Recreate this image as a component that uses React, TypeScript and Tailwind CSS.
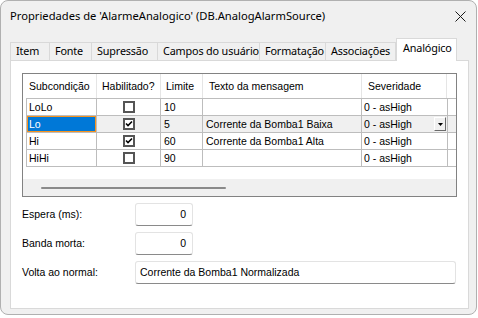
import React from "react";

const Check = ({ checked }: { checked: boolean }) => (
  <div className="w-[12px] h-[12px] border-2 border-[#555555] bg-white flex items-center justify-center">
    {checked && (
      <svg width="8" height="8" viewBox="0 0 8 8">
        <path d="M1 3.5 L3 5.5 L7 1.5" stroke="#000" strokeWidth="1.6" fill="none" />
      </svg>
    )}
  </div>
);

const rows = [
  { sub: "LoLo", hab: false, lim: "10", txt: "", sev: "0 - asHigh", sel: false },
  { sub: "Lo", hab: true, lim: "5", txt: "Corrente da Bomba1 Baixa", sev: "0 - asHigh", sel: true },
  { sub: "Hi", hab: true, lim: "60", txt: "Corrente da Bomba1 Alta", sev: "0 - asHigh", sel: false },
  { sub: "HiHi", hab: false, lim: "90", txt: "", sev: "0 - asHigh", sel: false },
];

const tabs = [
  { t: "Item", w: "w-[40px]" },
  { t: "Fonte", w: "w-[42px]" },
  { t: "Supressão", w: "w-[66px]" },
  { t: "Campos do usuário", w: "w-[102px]" },
  { t: "Formatação", w: "w-[66px]" },
  { t: "Associações", w: "w-[70px]" },
];

const tah = { fontFamily: '"Liberation Sans", Arial, sans-serif' };

export default function App() {
  return (
    <div
      className="w-[478px] h-[318px] bg-white text-black"
      style={{ fontFamily: '"Noto Sans", "Open Sans", sans-serif' }}
    >
      <div className="w-[477px] h-[315px] rounded-[8px] border border-[#b0b0b0] bg-[#f0f0f0] flex flex-col overflow-hidden">
        {/* Title bar */}
        <div className="h-[30px] flex items-center justify-between pl-[9px] pr-[9px]">
          <span className="text-[11.2px] leading-none">Propriedades de 'AlarmeAnalogico' (DB.AnalogAlarmSource)</span>
          <svg width="11" height="11" viewBox="0 0 11 11" className="mr-[1px]">
            <path d="M0.5 0.5 L10.5 10.5 M10.5 0.5 L0.5 10.5" stroke="#1a1a1a" strokeWidth="1" />
          </svg>
        </div>
        {/* Tabs */}
        <div className="h-[29px] pt-[6px] pl-[9px] flex items-end relative z-10">
          {tabs.map((t, i) => (
            <div
              key={t.t}
              className={`${t.w} h-[18px] border-t border-r border-[#d9d9d9] ${i === 0 ? "border-l" : ""} bg-[#f0f0f0] text-[10.8px] tracking-[-0.15px] leading-none pl-[5px] flex items-center whitespace-nowrap overflow-hidden`}
            >
              {t.t}
            </div>
          ))}
          <div className="w-[61px] h-[23px] -mb-[1px] border-t border-r border-l border-[#d9d9d9] bg-white text-[10.8px] tracking-[-0.15px] leading-none pl-[6px] pb-[4px] flex items-center whitespace-nowrap">
            Analógico
          </div>
        </div>
        {/* Panel */}
        <div className="ml-[9px] w-[459px] h-[249px] border border-[#d9d9d9] bg-white pl-[11px] pt-[12px]">
          {/* Grid */}
          <div style={tah} className="w-[435px] h-[124px] border border-[#828282] flex flex-col text-[10.5px] leading-none">
            <div className="h-[24px] flex shrink-0">
              <div className="w-[74px] h-full border-r border-[#e5e5e5] pl-[6px] flex items-center">Subcondição</div>
              <div className="w-[64px] h-full border-r border-[#e5e5e5] pl-[5px] flex items-center">Habilitado?</div>
              <div className="w-[42px] h-full border-r border-[#e5e5e5] pl-[5px] flex items-center">Limite</div>
              <div className="w-[159px] h-full border-r border-[#e5e5e5] pl-[6px] flex items-center">Texto da mensagem</div>
              <div className="w-[85px] h-full border-r border-[#e5e5e5] pl-[6px] flex items-center">Severidade</div>
              <div className="flex-1" />
            </div>
            <div className="ml-[3px] border-t border-[#bdbdbd] flex flex-col">
              {rows.map((r) => (
                <div key={r.sub} className={`h-[17px] flex border-b border-[#bdbdbd] ${r.sel ? "bg-[#f0f0f0]" : "bg-white"}`}>
                  <div className={`w-[71px] h-full border-l border-r border-[#bdbdbd] flex items-center`}>
                    {r.sel ? (
                      <div className="w-full h-full bg-[#0078d7] border border-[#f7931e] text-white pl-[1px] flex items-center">{r.sub}</div>
                    ) : (
                      <span className="pl-[2px]">{r.sub}</span>
                    )}
                  </div>
                  <div className="w-[64px] h-full border-r border-[#bdbdbd] flex items-center justify-center">
                    <Check checked={r.hab} />
                  </div>
                  <div className="w-[42px] h-full border-r border-[#bdbdbd] pl-[3px] flex items-center">{r.lim}</div>
                  <div className="w-[159px] h-full border-r border-[#bdbdbd] pl-[3px] flex items-center whitespace-nowrap">{r.txt}</div>
                  <div className="w-[86px] h-full border-r border-[#bdbdbd] pl-[2px] flex items-center justify-between">
                    <span>{r.sev}</span>
                    {r.sel && (
                      <div className="w-[12px] h-[14px] mr-[1px] bg-[#f0f0f0] border border-t-white border-l-white border-r-[#6a6a6a] border-b-[#6a6a6a] flex items-center justify-center">
                        <svg width="5" height="3" viewBox="0 0 5 3">
                          <path d="M0 0 L5 0 L2.5 3 Z" fill="#000" />
                        </svg>
                      </div>
                    )}
                  </div>
                  <div className="flex-1" />
                </div>
              ))}
            </div>
            <div className="h-[12px] shrink-0" />
            <div className="h-[17px] bg-[#f0f0f0] flex items-center pl-[18px] shrink-0">
              <div className="w-[185px] h-[2px] rounded-full bg-[#8a8a8a]" />
            </div>
          </div>
          {/* Form */}
          <div style={tah} className="mt-[6px] flex flex-col gap-[6px] text-[10.5px] leading-none">
            <div className="flex items-center">
              <div className="w-[113px]">Espera (ms):</div>
              <div className="w-[58px] h-[23px] bg-white border border-[#e3e3e3] border-b-[#8a8a8a] rounded-[3px] flex items-center justify-end pr-[6px]">0</div>
            </div>
            <div className="flex items-center">
              <div className="w-[113px]">Banda morta:</div>
              <div className="w-[58px] h-[23px] bg-white border border-[#e3e3e3] border-b-[#8a8a8a] rounded-[3px] flex items-center justify-end pr-[6px]">0</div>
            </div>
            <div className="flex items-center">
              <div className="w-[113px]">Volta ao normal:</div>
              <div className="w-[321px] h-[23px] bg-white border border-[#e3e3e3] border-b-[#8a8a8a] rounded-[3px] flex items-center pl-[4px]">Corrente da Bomba1 Normalizada</div>
            </div>
          </div>
        </div>
      </div>
    </div>
  );
}
